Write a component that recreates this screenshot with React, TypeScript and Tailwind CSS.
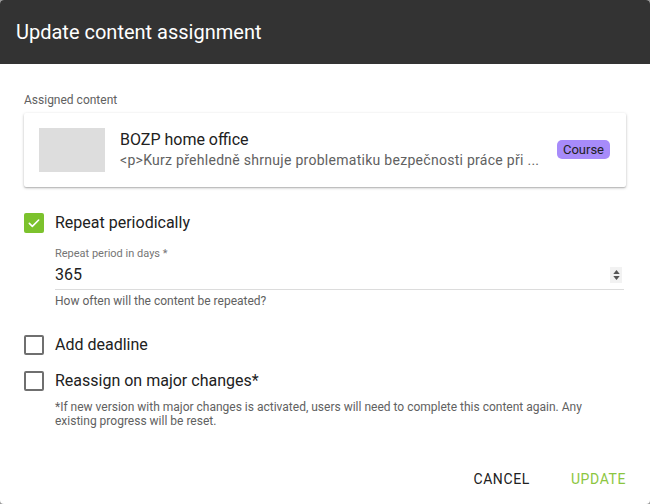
import React from "react";

function CheckIcon() {
  return (
    <svg viewBox="0 0 24 24" className="w-[16px] h-[16px]" fill="none" stroke="white" strokeWidth="2.4" strokeLinecap="round" strokeLinejoin="round">
      <path d="M5 12.5l4.5 4.5L19 7.5" />
    </svg>
  );
}

export default function App() {
  return (
    <div className="w-[650px] h-[504px] bg-[#9a9a9a]" style={{ fontFamily: "Roboto, 'Noto Sans', sans-serif" }}>
      <div className="w-[650px] h-[504px] bg-white rounded-[4px] overflow-hidden flex flex-col">
        <div className="h-[64px] bg-[#333333] flex items-center px-[16px]">
          <h1 className="text-white text-[20px] font-normal leading-none">Update content assignment</h1>
        </div>
        <div className="flex-1 px-[24px] pt-[29px] flex flex-col">
          <div className="text-[12px] text-[#616161] leading-[14px]">Assigned content</div>
          <div className="mt-[6px] h-[74px] shadow-[0_1px_3px_rgba(0,0,0,0.25),0_1px_1px_rgba(0,0,0,0.12)] rounded-[2px] flex items-center pl-[15px] pr-[16px]">
            <div className="w-[66px] h-[44px] bg-[#dddddd] shrink-0" />
            <div className="ml-[15px] flex-1 min-w-0 flex flex-col">
              <div className="text-[16px] text-[#212121] leading-[20px] mt-[-2px]">BOZP home office</div>
              <div className="text-[14px] text-[#616161] leading-[18px] mt-[1px] whitespace-nowrap tracking-[0.28px]">&lt;p&gt;Kurz přehledně shrnuje problematiku bezpečnosti práce při ...</div>
            </div>
            <div className="ml-[12px] bg-[#a78bfa] text-[#212121] text-[13px] leading-[19px] px-[6px] rounded-[5px] shrink-0 mt-[-2px]">Course</div>
          </div>

          <label className="mt-[26px] flex items-center h-[20px]">
            <span className="w-[20px] h-[20px] rounded-[2px] bg-[#7cc22d] flex items-center justify-center">
              <CheckIcon />
            </span>
            <span className="ml-[11px] text-[16px] text-[#212121]">Repeat periodically</span>
          </label>

          <div className="ml-[31px] mr-[2px] mt-[14px] flex flex-col">
            <div className="text-[11px] text-[#757575] leading-[14px]">Repeat period in days *</div>
            <div className="flex items-center justify-between h-[24px] mt-[2px] border-b border-[#dcdcdc] pb-[2px] box-content">
              <span className="text-[16px] text-[#212121]">365</span>
              <span className="mr-[2px] w-[12px] h-[16px] bg-[#f2f2f2] flex flex-col items-center justify-center gap-[2px]">
                <svg viewBox="0 0 8 5" className="w-[7px] h-[4px]"><path d="M4 0L8 5H0z" fill="#555" /></svg>
                <svg viewBox="0 0 8 5" className="w-[7px] h-[4px]"><path d="M0 0H8L4 5z" fill="#555" /></svg>
              </span>
            </div>
            <div className="text-[12px] text-[#616161] leading-[14px] mt-[4px]">How often will the content be repeated?</div>
          </div>

          <label className="mt-[27px] flex items-center h-[20px]">
            <span className="w-[20px] h-[20px] rounded-[2px] border-2 border-[#6f6f6f] box-border" />
            <span className="ml-[11px] text-[16px] text-[#212121]">Add deadline</span>
          </label>

          <label className="mt-[16px] flex items-center h-[20px]">
            <span className="w-[20px] h-[20px] rounded-[2px] border-2 border-[#6f6f6f] box-border" />
            <span className="ml-[11px] text-[16px] text-[#212121]">Reassign on major changes*</span>
          </label>

          <p className="ml-[31px] mt-[9px] text-[12px] text-[#616161] leading-[14px]">
            *If new version with major changes is activated, users will need to complete this content again. Any existing progress will be reset.
          </p>

          <div className="mt-auto mb-[7px] flex justify-end items-center">
            <button className="h-[36px] px-[8px] text-[14px] text-[#212121] tracking-[0.6px]">CANCEL</button>
            <button className="h-[36px] px-[8px] mr-[-8px] ml-[25px] text-[14px] text-[#8cc63f] tracking-[0.6px]">UPDATE</button>
          </div>
        </div>
      </div>
    </div>
  );
}
